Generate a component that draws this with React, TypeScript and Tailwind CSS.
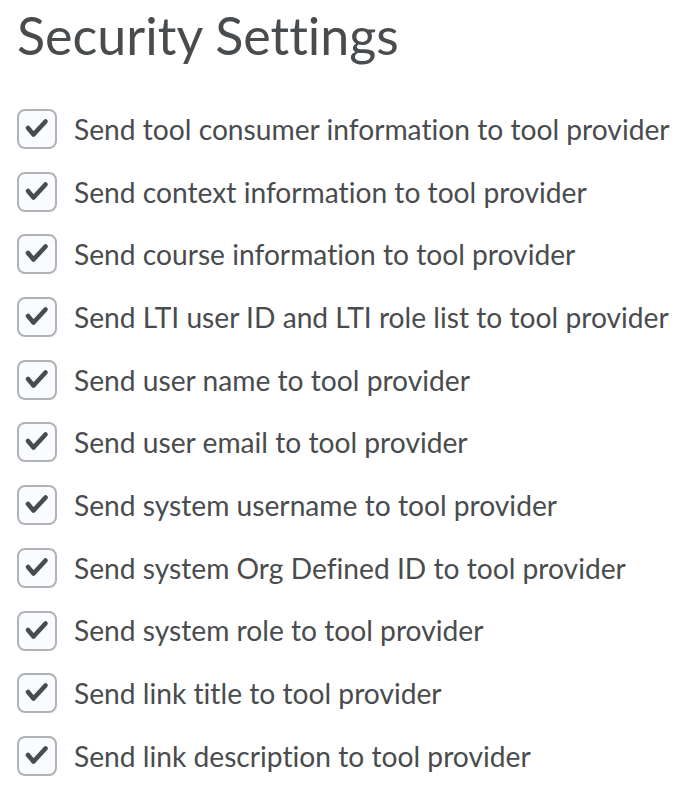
const items = [
  'Send tool consumer information to tool provider',
  'Send context information to tool provider',
  'Send course information to tool provider',
  'Send LTI user ID and LTI role list to tool provider',
  'Send user name to tool provider',
  'Send user email to tool provider',
  'Send system username to tool provider',
  'Send system Org Defined ID to tool provider',
  'Send system role to tool provider',
  'Send link title to tool provider',
  'Send link description to tool provider',
];

function CheckIcon() {
  return (
    <svg viewBox="0 0 36 36" className="h-9 w-9" fill="none">
      <path
        d="M9 17l5.5 6.5L26.5 10.5"
        stroke="#494c4e"
        strokeWidth="4.6"
        strokeLinecap="round"
        strokeLinejoin="round"
      />
    </svg>
  );
}

export default function App() {
  return (
    <main className="min-h-screen bg-white px-[17px] pt-[3px] text-[#494c4e] font-['Lato',sans-serif] [font-variant-ligatures:none]">
      <h1 className="text-[52px] leading-[64px] font-normal">Security Settings</h1>
      <ul className="mt-[42px] flex flex-col gap-[22.7px]">
        {items.map((label) => (
          <li key={label} className="flex items-center gap-[17px]">
            <span className="flex h-10 w-10 flex-shrink-0 items-center justify-center rounded-[8px] border-2 border-[#b0b3b6] bg-[#f9fbff]">
              <CheckIcon />
            </span>
            <span className="text-[28.2px] leading-none whitespace-nowrap">{label}</span>
          </li>
        ))}
      </ul>
    </main>
  );
}
